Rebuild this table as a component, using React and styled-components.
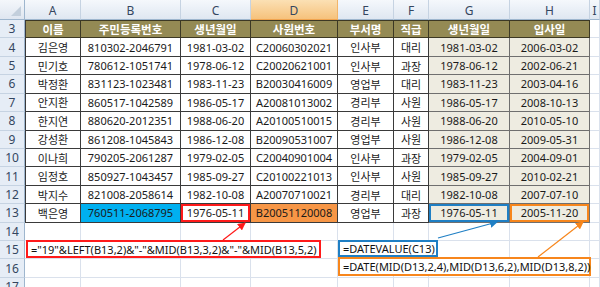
import React from 'react';
import styled, { createGlobalStyle, css } from 'styled-components';

const GlobalStyle = createGlobalStyle`
  html, body {
    margin: 0;
    padding: 0;
    background: #ffffff;
    overflow: hidden;
  }
  body {
    font-family: "Noto Sans", "Noto Sans CJK KR", sans-serif;
  }
`;

const Sheet = styled.div`
  position: relative;
  width: 600px;
  height: 287px;
  overflow: hidden;
  display: grid;
  grid-template-columns: 25px 56px 100px 70px 87px 56px 35px 81px 80px 1fr;
  grid-template-rows: 20px repeat(15, 18.43px);
  font-size: 11px;
  color: #1a1a1a;
`;

const Corner = styled.div`
  position: relative;
  background: linear-gradient(#f4f7fb, #dfe6f0);
  border-right: 1px solid #9eb6ce;
  border-bottom: 1px solid #9eb6ce;

  &::after {
    content: '';
    position: absolute;
    right: 3px;
    bottom: 3px;
    border-left: 10px solid transparent;
    border-bottom: 10px solid #c3cfdc;
  }
`;

const ColHead = styled.div`
  display: flex;
  align-items: center;
  justify-content: center;
  padding-top: 1px;
  background: ${p => (p.$active ? 'linear-gradient(#fbe0b4, #f6c27c)' : 'linear-gradient(#f5f8fc, #dfe7f1)')};
  border-right: 1px solid ${p => (p.$active ? '#f2b56a' : '#c6d3e2')};
  border-bottom: 1px solid ${p => (p.$active ? '#f0a44f' : '#9eb6ce')};
  color: #34465f;
  font-size: 12px;
`;

const RowHead = styled.div`
  display: flex;
  align-items: center;
  justify-content: center;
  background: #e6edf6;
  border-right: 1px solid #9eb6ce;
  border-bottom: 1px solid #c6d3e2;
  color: #34465f;
  font-size: 12px;
`;

const cellKinds = {
  head: css`
    background: #948a54;
    color: #ffffff;
    font-weight: 700;
    font-size: 11.5px;
    border-right: 1px solid #3c3824;
    border-bottom: 1px solid #3c3824;
    border-top: 1px solid #3c3824;
  `,
  data: css`
    background: #ffffff;
    border-right: 1px solid #3a3a3a;
    border-bottom: 1px solid #3a3a3a;
  `,
  date: css`
    background: #eeece1;
    border-right: 1px solid #6f6f6f;
    border-bottom: 1px solid #6f6f6f;
  `,
  blank: css`
    background: #ffffff;
    border-right: 1px solid #dae1ec;
    border-bottom: 1px solid #dae1ec;
  `,
};

const Cell = styled.div`
  display: flex;
  align-items: center;
  justify-content: center;
  white-space: nowrap;
  overflow: hidden;
  ${p => cellKinds[p.$kind]}
  ${p => p.$first && 'border-left: 1px solid #3a3a3a;'}
  ${p => p.$fill && `background: ${p.$fill};`}
  ${p => p.$mark && `box-shadow: inset 0 0 0 2px ${p.$mark};`}
`;

const Callout = styled.div`
  position: absolute;
  box-sizing: border-box;
  display: flex;
  align-items: center;
  padding-left: 3px;
  background: #ffffff;
  border: 2px solid ${p => p.$color};
  font-size: 11px;
  color: #111111;
  white-space: nowrap;
`;

const Arrows = styled.svg`
  position: absolute;
  left: 0;
  top: 0;
  pointer-events: none;
`;

const letters = ['A', 'B', 'C', 'D', 'E', 'F', 'G', 'H', 'I'];

const header = ['이름', '주민등록번호', '생년월일', '사원번호', '부서명', '직급', '생년월일', '입사일'];

const people = [
  ['김은영', '810302-2046791', '1981-03-02', 'C20060302021', '인사부', '대리', '1981-03-02', '2006-03-02'],
  ['민기호', '780612-1051741', '1978-06-12', 'C20020621001', '인사부', '과장', '1978-06-12', '2002-06-21'],
  ['박정환', '831123-1023481', '1983-11-23', 'B20030416009', '영업부', '대리', '1983-11-23', '2003-04-16'],
  ['안지환', '860517-1042589', '1986-05-17', 'A20081013002', '경리부', '사원', '1986-05-17', '2008-10-13'],
  ['한지연', '880620-2012351', '1988-06-20', 'A20100510015', '경리부', '사원', '1988-06-20', '2010-05-10'],
  ['강성환', '861208-1045843', '1986-12-08', 'B20090531007', '영업부', '사원', '1986-12-08', '2009-05-31'],
  ['이나희', '790205-2061287', '1979-02-05', 'C20040901004', '인사부', '과장', '1979-02-05', '2004-09-01'],
  ['임정호', '850927-1043457', '1985-09-27', 'C20100221013', '인사부', '사원', '1985-09-27', '2010-02-21'],
  ['박지수', '821008-2058614', '1982-10-08', 'A20070710021', '경리부', '대리', '1982-10-08', '2007-07-10'],
  ['백은영', '760511-2068795', '1976-05-11', 'B20051120008', '영업부', '과장', '1976-05-11', '2005-11-20'],
];

// row 13 highlights
const fills = { B: '#00b0f0', D: '#f79646' };
const marks = { C: '#ff1a1a', G: '#1f7fc4', H: '#f7861c' };

function renderRow(rowNo) {
  const cells = [<RowHead key={`r${rowNo}`}>{rowNo}</RowHead>];
  letters.forEach((letter, i) => {
    let kind = 'blank';
    let text = '';
    if (i < 8 && rowNo === 3) {
      kind = 'head';
      text = header[i];
    } else if (i < 8 && rowNo >= 4 && rowNo <= 13) {
      kind = i >= 6 ? 'date' : 'data';
      text = people[rowNo - 4][i];
    }
    const last = rowNo === 13;
    cells.push(
      <Cell
        key={`${letter}${rowNo}`}
        $kind={kind}
        $first={i === 0 && kind !== 'blank'}
        $fill={last ? fills[letter] : undefined}
        $mark={last ? marks[letter] : undefined}
      >
        {text}
      </Cell>
    );
  });
  return cells;
}

function App() {
  const rows = [];
  for (let r = 3; r <= 17; r++) rows.push(...renderRow(r));

  return (
    <>
      <GlobalStyle />
      <Sheet>
        <Corner />
        {letters.map(l => (
          <ColHead key={l} $active={l === 'D'}>{l}</ColHead>
        ))}
        {rows}

        <Callout $color="#ff1a1a" style={{ left: 26, top: 240, width: 295, height: 18 }}>
          ="19"&amp;LEFT(B13,2)&amp;"-"&amp;MID(B13,3,2)&amp;"-"&amp;MID(B13,5,2)
        </Callout>
        <Callout $color="#1f7fc4" style={{ left: 338, top: 240, width: 100, height: 17 }}>
          =DATEVALUE(C13)
        </Callout>
        <Callout $color="#f7861c" style={{ left: 338, top: 257, width: 253, height: 19 }}>
          =DATE(MID(D13,2,4),MID(D13,6,2),MID(D13,8,2))
        </Callout>

        <Arrows width="600" height="287" viewBox="0 0 600 287">
          <defs>
            {[['red', '#ff1a1a'], ['blue', '#1f7fc4'], ['orange', '#f7861c']].map(([id, c]) => (
              <marker key={id} id={`head-${id}`} markerWidth="8" markerHeight="8" refX="7" refY="4" orient="auto" markerUnits="userSpaceOnUse">
                <path d="M0,0 L8,4 L0,8 Z" fill={c} />
              </marker>
            ))}
          </defs>
          <line x1="223" y1="240" x2="245" y2="223" stroke="#ff1a1a" strokeWidth="1.2" markerEnd="url(#head-red)" />
          <line x1="438" y1="238" x2="497" y2="222" stroke="#1f7fc4" strokeWidth="1.2" markerEnd="url(#head-blue)" />
          <line x1="538" y1="257" x2="583" y2="222" stroke="#f7861c" strokeWidth="1.2" markerEnd="url(#head-orange)" />
        </Arrows>
      </Sheet>
    </>
  );
}

export default App;
